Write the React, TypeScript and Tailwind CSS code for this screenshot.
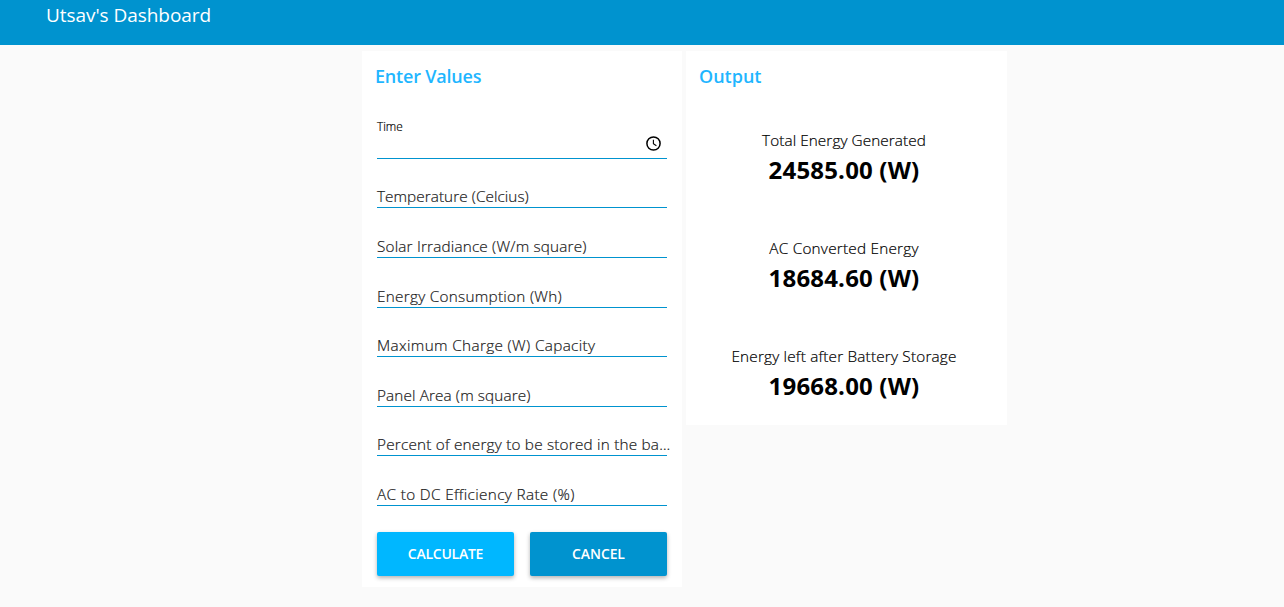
import React from "react";

type Field = { label: string; height: string; tracking: string };

const fields: Field[] = [
  { label: "Temperature (Celcius)", height: "h-[49px]", tracking: "tracking-[0.06px]" },
  { label: "Solar Irradiance (W/m square)", height: "h-[50px]", tracking: "tracking-[0.18px]" },
  { label: "Energy Consumption (Wh)", height: "h-[50px]", tracking: "tracking-[0.28px]" },
  { label: "Maximum Charge (W) Capacity", height: "h-[49px]", tracking: "tracking-[0.35px]" },
  { label: "Panel Area (m square)", height: "h-[50px]", tracking: "tracking-[0.12px]" },
  { label: "Percent of energy to be stored in the ba…", height: "h-[49px]", tracking: "tracking-[0.21px]" },
  { label: "AC to DC Efficiency Rate (%)", height: "h-[50px]", tracking: "tracking-[0.35px]" },
];

const results = [
  { label: "Total Energy Generated", value: "24585.00 (W)", tracking: "tracking-[0.08px]" },
  { label: "AC Converted Energy", value: "18684.60 (W)", tracking: "tracking-[0.23px]" },
  { label: "Energy left after Battery Storage", value: "19668.00 (W)", tracking: "tracking-[0.2px]" },
];

function ClockIcon() {
  return (
    <svg className="mr-[5px] size-[17px]" viewBox="0 0 17 17" fill="none" stroke="black" aria-hidden="true">
      <circle cx="8.5" cy="8.5" r="6.6" strokeWidth="1.5" />
      <path d="M8.4 4.8v4l3 1.9" strokeWidth="1.1" />
    </svg>
  );
}

export default function App() {
  return (
    <div className="min-h-[607px] bg-[#fafafa] font-['Open_Sans','Noto_Sans',sans-serif] text-black">
      <header className="h-[45px] bg-[#0093cf] pl-[46px] text-[19px] leading-[30px] tracking-[-0.05px] text-white">Utsav's Dashboard</header>
      <main className="flex items-start gap-1 pt-[6px] pl-[362px]">
        <section className="h-[536px] w-[320px] bg-white px-[15px] pt-[11px]">
          <h2 className="-ml-[2px] h-[57px] text-[18px] font-semibold leading-[28px] tracking-[-0.2px] text-[#1fb6ff]">Enter Values</h2>
          <div className="flex h-[40px] flex-col border-b border-[#0093cf]">
            <label className="-mt-px mb-px text-[11.8px] leading-[16px] font-light [-webkit-text-stroke:0.2px_black]">Time</label>
            <div className="flex justify-end">
              <ClockIcon />
            </div>
          </div>
          {fields.map((f) => (
            <div
              key={f.label}
              className={`flex items-end border-b border-[#0093cf] text-[15.3px] font-light leading-[22px] whitespace-nowrap text-[#1a1a1a] [-webkit-text-stroke:0.2px_#1a1a1a] ${f.height} ${f.tracking}`}
            >
              {f.label}
            </div>
          ))}
          <div className="mt-[26px] flex gap-4">
            <button className="h-[44px] flex-1 rounded-xs bg-[#00b7ff] pb-[2px] text-[14px] font-semibold tracking-[-0.25px] text-white shadow-[0_2px_4px_rgba(0,0,0,0.3)]">
              CALCULATE
            </button>
            <button className="h-[44px] flex-1 rounded-xs bg-[#0093cf] pb-[2px] text-[14px] font-semibold tracking-[-0.1px] text-white shadow-[0_2px_4px_rgba(0,0,0,0.3)]">
              CANCEL
            </button>
          </div>
        </section>
        <section className="h-[374px] w-[321px] bg-white pt-[11px] pr-[18px] pl-[13px]">
          <h2 className="h-[66px] text-[18px] font-semibold leading-[28px] text-[#1fb6ff]">Output</h2>
          {results.map((r) => (
            <div key={r.label} className="h-[108px] text-center whitespace-nowrap">
              <div className={`text-[15.3px] font-light leading-[24px] [-webkit-text-stroke:0.2px_black] ${r.tracking}`}>{r.label}</div>
              <div className="text-[24px] font-bold leading-[36px] tracking-[0.18px]">{r.value}</div>
            </div>
          ))}
        </section>
      </main>
    </div>
  );
}
